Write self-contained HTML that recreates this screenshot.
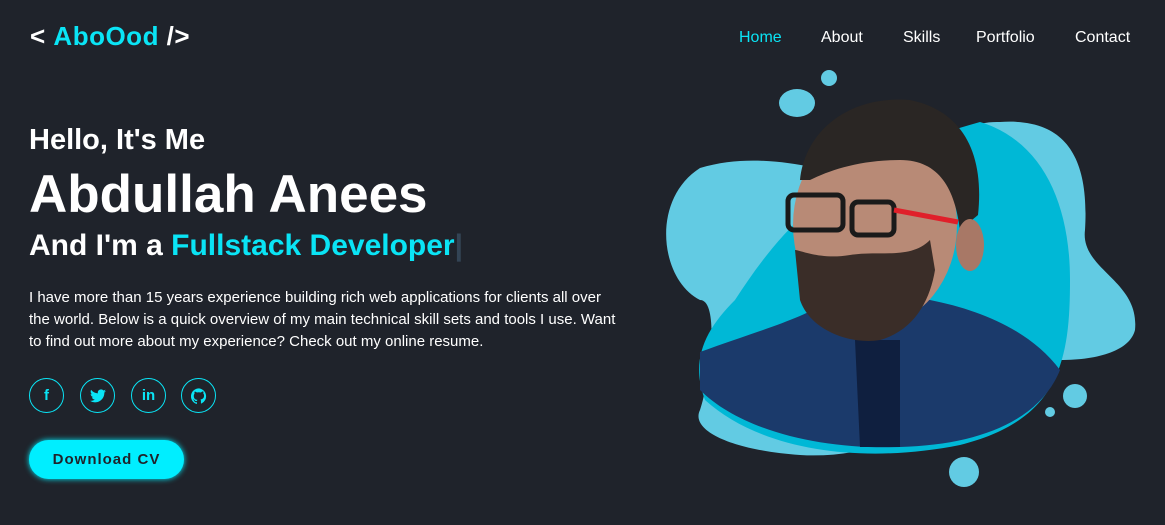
<!DOCTYPE html>
<html><head><style>
*{margin:0;padding:0;box-sizing:border-box}
body{width:1165px;height:525px;background:#1f232b;font-family:"Liberation Sans",sans-serif;color:#fff;position:relative;overflow:hidden}
.logo{position:absolute;left:30px;top:21px;font-size:26px;font-weight:bold;letter-spacing:.5px}
.logo b{color:#0ae4f5}
nav a{position:absolute;top:29px;font-size:16px;color:#fff;text-decoration:none}
h3{position:absolute;left:29px;top:124px;font-size:29px;font-weight:bold}
h1{position:absolute;left:29px;top:164px;font-size:53px;font-weight:bold}
h2{position:absolute;left:29px;top:229px;font-size:30px;font-weight:bold}
h2 span{color:#0ae4f5}
p{position:absolute;left:29px;top:287px;width:590px;font-size:15px;line-height:22px}
.ic{position:absolute;top:378px;width:35px;height:35px;border:1.5px solid #0ae4f5;border-radius:50%;display:flex;align-items:center;justify-content:center;color:#0ae4f5;font-weight:bold;font-size:15px}
.btn{position:absolute;left:29px;top:440px;width:155px;height:39px;border-radius:20px;background:#00eeff;box-shadow:0 0 6px #00eeff;color:#1f232b;font-weight:bold;font-size:15px;letter-spacing:1px;display:flex;align-items:center;justify-content:center}
</style></head><body>
<div class="logo">&lt; <b>AboOod</b> /&gt;</div>
<nav><a style="left:739px;color:#0ae4f5">Home</a><a style="left:821px">About</a><a style="left:903px">Skills</a><a style="left:976px">Portfolio</a><a style="left:1075px">Contact</a></nav>
<h3>Hello, It's Me</h3>
<h1>Abdullah Anees</h1>
<h2>And I'm a <span>Fullstack Developer</span><span style="color:#345">|</span></h2>
<p>I have more than 15 years experience building rich web applications for clients all over the world. Below is a quick overview of my main technical skill sets and tools I use. Want to find out more about my experience? Check out my online resume.</p>
<div class="ic" style="left:29px">f</div>
<div class="ic" style="left:80px"><svg width="16" height="14" viewBox="0 0 24 20"><path fill="#0ae4f5" d="M24 2.4a10 10 0 0 1-2.8.8A5 5 0 0 0 23.3.5a10 10 0 0 1-3.1 1.2A4.9 4.9 0 0 0 11.8 6 14 14 0 0 1 1.7.9a4.9 4.9 0 0 0 1.5 6.6A5 5 0 0 1 1 6.9a4.9 4.9 0 0 0 3.9 4.8 5 5 0 0 1-2.2.1 4.9 4.9 0 0 0 4.6 3.4A9.9 9.9 0 0 1 0 17.3 14 14 0 0 0 7.5 19.5c9 0 14-7.5 14-14v-.6A10 10 0 0 0 24 2.4z"/></svg></div>
<div class="ic" style="left:131px">in</div>
<div class="ic" style="left:181px"><svg width="16" height="16" viewBox="0 0 24 24"><path fill="#0ae4f5" d="M12 .5a12 12 0 0 0-3.8 23.4c.6.1.8-.3.8-.6v-2c-3.3.7-4-1.6-4-1.6-.6-1.4-1.4-1.8-1.4-1.8-1-.7.1-.7.1-.7 1.2.1 1.8 1.2 1.8 1.2 1 1.8 2.8 1.3 3.5 1 .1-.8.4-1.3.7-1.6-2.7-.3-5.5-1.3-5.5-6 0-1.2.5-2.3 1.2-3.1-.1-.4-.5-1.6.1-3.2 0 0 1-.3 3.3 1.2a11.5 11.5 0 0 1 6 0C17.3 4.6 18.3 5 18.3 5c.7 1.6.2 2.8.1 3.2.8.8 1.2 1.9 1.2 3.1 0 4.6-2.8 5.6-5.5 5.9.4.4.8 1.1.8 2.2v3.3c0 .3.2.7.8.6A12 12 0 0 0 12 .5z"/></svg></div>
<div class="btn">Download CV</div>
<svg style="position:absolute;left:0;top:0" width="1165" height="525">
<circle cx="829" cy="78" r="8" fill="#62cbe3"/>
<ellipse cx="797" cy="103" rx="18" ry="14" fill="#62cbe3"/>
<circle cx="1075" cy="396" r="12" fill="#62cbe3"/>
<circle cx="1050" cy="412" r="5" fill="#62cbe3"/>
<circle cx="964" cy="472" r="15" fill="#62cbe3"/>
<path d="M700 168 C760 150 820 170 850 175 C900 170 950 120 1000 122 C1060 118 1090 150 1085 230 C1080 270 1140 280 1135 330 C1130 350 1100 360 1060 360 L1000 380 C950 420 880 460 800 455 C730 450 690 430 700 410 C710 380 720 300 700 300 C660 280 650 200 700 168Z" fill="#62cbe3"/>
<path d="M735 300 C780 230 840 160 980 122 C1040 140 1070 200 1070 280 C1070 360 1060 420 960 445 C860 465 760 450 705 400 C690 360 705 330 735 300Z" fill="#00b8d6"/>
<path d="M700 352 C760 330 800 320 830 300 L930 300 C980 310 1030 330 1060 370 C1040 420 980 445 900 447 C820 450 740 430 700 390Z" fill="#1b3a6b"/>
<path d="M855 340 L900 340 L900 447 L860 447Z" fill="#0f1f3f"/>
<ellipse cx="875" cy="225" rx="82" ry="100" fill="#b88a76"/>
<path d="M800 300 C810 330 850 345 880 340 C915 330 930 300 935 270 L930 240 C910 260 880 250 850 255 C820 260 800 250 795 250Z" fill="#3a2d28"/>
<path d="M800 180 C805 130 850 95 910 100 C960 110 985 150 978 215 L960 230 C955 190 940 160 900 160 C860 160 830 170 810 180Z" fill="#2a2624"/>
<ellipse cx="970" cy="245" rx="14" ry="26" fill="#a87866"/>
<rect x="788" y="195" width="55" height="35" rx="6" fill="none" stroke="#1a1a1a" stroke-width="5"/>
<rect x="852" y="202" width="42" height="33" rx="6" fill="none" stroke="#1a1a1a" stroke-width="5"/>
<path d="M894 210 L958 222" stroke="#e0202a" stroke-width="5"/>
</svg>
</body></html>
